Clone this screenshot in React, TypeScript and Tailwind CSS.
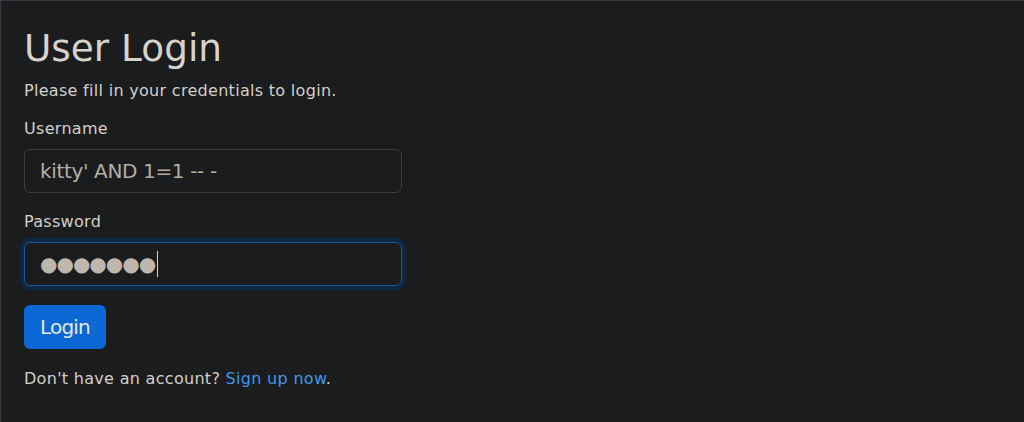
export default function App() {
  return (
    <div className="h-[422px] overflow-hidden border-l border-t border-[#34373b] bg-[#1b1c1e] font-['DejaVu_Sans',sans-serif] text-[#d3cfc9]">
      <div className="px-[23px] pt-[25px]">
        <h1 className="mb-2 text-[37.4px] leading-[45px] text-[#d6d2cc]">User Login</h1>
        <p className="mb-[14px] text-base leading-6 tracking-[0.3px]">Please fill in your credentials to login.</p>

        <form className="w-[378px]" onSubmit={(e) => e.preventDefault()}>
          {/* Username */}
          <div className="mb-[17px]">
            <label className="mb-2 block text-base leading-6 tracking-[0.3px]">Username</label>
            <input
              readOnly
              value="kitty' AND 1=1 -- -"
              className="block h-[44px] w-full rounded-[6px] border border-[#3a3d41] bg-[#1b1c1e] px-[15px] text-[20px] tracking-[-0.35px] text-[#b3aea6] outline-none"
            />
          </div>

          {/* Password (focused) */}
          <div className="mb-[19px]">
            <label className="mb-2 block text-base leading-6 tracking-[0.3px]">Password</label>
            <div className="flex h-[44px] w-full items-center rounded-[6px] border border-[#1d5592] bg-[#1b1c1e] px-[15px] shadow-[0_0_0_4px_#0e2946]">
              <span className="text-[20px] leading-none tracking-[-1px] text-[#bdb7ad]">●●●●●●●</span>
              <span className="ml-[2px] h-[26px] w-px bg-[#d6d2cc]" />
            </div>
          </div>

          <button
            type="submit"
            className="h-[44px] rounded-[6px] bg-[#0a67d4] px-4 text-[20px] leading-[26px] tracking-[-0.8px] text-[#e8e6e3]"
          >
            Login
          </button>

          <p className="mt-[18px] text-base leading-6 tracking-[0.3px]">
            Don't have an account?{' '}
            <a href="#" className="text-[#3b9ae8]">
              Sign up now
            </a>
            .
          </p>
        </form>
      </div>
    </div>
  );
}
